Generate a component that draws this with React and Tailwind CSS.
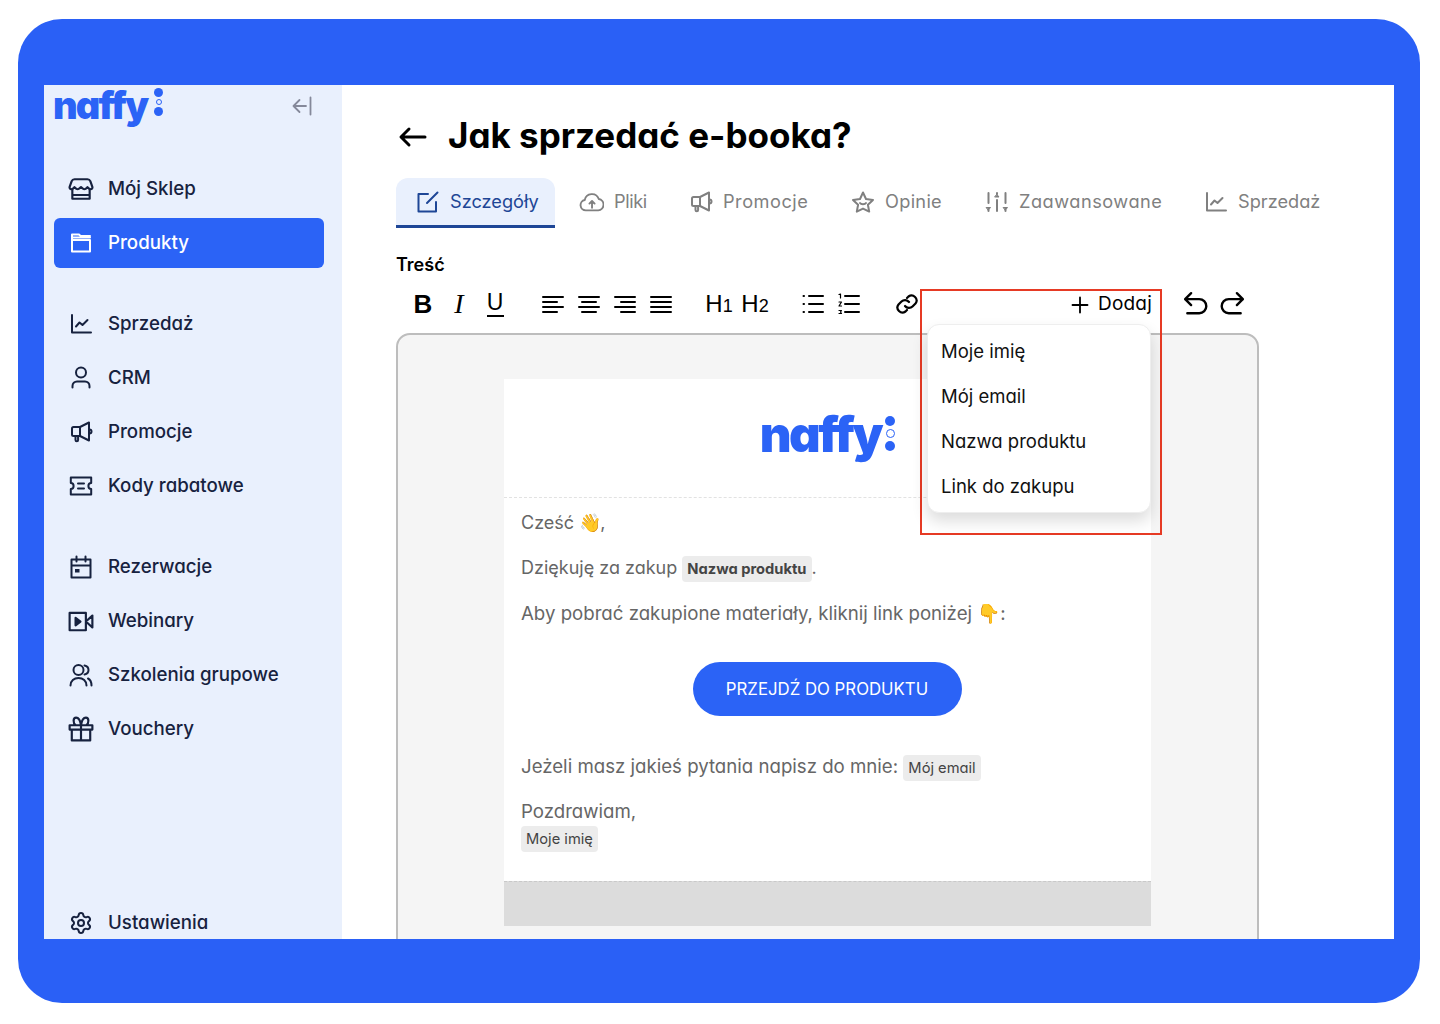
import React from "react";
import { Settings } from "lucide-react";

const S = ({ children, w = 24, h = 24, sw = 2, vb = "0 0 24 24", className = "" }) => (
  <svg width={w} height={h} viewBox={vb} fill="none" stroke="currentColor" strokeWidth={sw} strokeLinecap="round" strokeLinejoin="round" className={`shrink-0 ${className}`}>
    {children}
  </svg>
);

const Store = () => (
  <S w={26} h={26} className="-mx-[1px]">
    <path d="M6 3h12c1.500 0 2.200.8 2.600 1.800L22.500 10c.3 1-.3 2.200-1.600 2.200-1.200 0-2-.9-2.900-1.900-.9 1-2.200 1.900-3 1.900s-1.800-.9-3-1.900c-1.200 1-2.200 1.900-3 1.900s-2.100-.9-3-1.900c-.9 1-1.700 1.900-2.900 1.900C1.800 12.200 1.200 11 1.500 10l1.900-5.200C3.800 3.800 4.500 3 6 3z" />
    <path d="M4 12.500V21h16v-8.500M4 17.500h16" />
  </S>
);
const Folder = () => (
  <S>
    <path d="M3 9V3.500h7l1.500 1.500H21" />
    <path d="M3 9h18v11.500H3z" />
    <path d="M3 6.500h18" />
  </S>
);
const Chart = () => (
  <S>
    <path d="M3 3v17.500h19" />
    <path d="M7 14.500l3.500-4 3 2.500 5-5" />
  </S>
);
const User = () => (
  <S>
    <circle cx="12" cy="6.500" r="5" />
    <path d="M3.500 21.500V20c0-2.500 2-4.500 4.500-4.500h8c2.500 0 4.500 2 4.500 4.500v1.500" />
  </S>
);
const Mega = () => (
  <S>
    <path d="M20 2.500v18l-9-4.500H4.500A1.500 1.500 0 0 1 3 14.500V8.500A1.500 1.500 0 0 1 4.500 7H11z" />
    <path d="M11 7v9M20 9.500h.5a2 2 0 0 1 0 4H20M6.500 16v4a1.300 1.300 0 0 0 2.600 0v-4" />
  </S>
);
const Ticket = () => (
  <S>
    <path d="M1.800 3.500h20.400V9c-1.800 0-2.800 1.200-2.800 3s1 3 2.800 3v5.500H1.800V15c1.800 0 2.800-1.200 2.800-3s-1-3-2.800-3z" />
    <path d="M9 9.500h6M9 14.500h6" />
  </S>
);
const Cal = () => (
  <S>
    <path d="M2.500 4.500h19v18h-19zM2.500 10.500h19M7.500 1.500v5M16.500 1.500v5" />
    <rect x="6" y="14" width="4.500" height="3.500" fill="currentColor" stroke="none" />
  </S>
);
const Video = () => (
  <S w={26} h={26} className="-mx-[1px]">
    <path d="M1.500 4.500h15v16h-15zM16.500 12.500l6-5.500v11z" />
    <path d="M7 9l4.500 3.500L7 16z" fill="currentColor" />
  </S>
);
const Users = () => (
  <S>
    <circle cx="9.500" cy="7" r="5" />
    <path d="M1.500 22.500c0-4.500 3.500-7.500 8-7.500s8 3 8 7.500M15.500 2.500c2.500.5 4 2.500 4 4.500s-1.500 4-4 4.500M19 15.500c2.200 1.200 3.500 3.800 3.500 7" />
  </S>
);
const Gift = () => (
  <S w={26} h={26} className="-mx-[1px]">
    <path d="M1.500 8.500h21v4h-21zM3.500 12.500V22.500h17v-10M12 8.500v14M12 8.500S11 1.500 7.500 1.500c-3 0-3 5-.5 7M12 8.500s1-7 4.500-7c3 0 3 5 .5 7" />
  </S>
);

const NavItem = ({ icon, label, active }) => (
  <div className={`flex h-[50px] w-[270px] items-center gap-[15px] rounded-md pl-[15px] text-[18.700px] font-medium ${active ? "bg-[#2b63f6] text-white" : "text-[#17223f]"}`}>
    {icon}
    <span>{label}</span>
  </div>
);

const Logo = ({ size }) => (
  <span className={`font-black tracking-[-0.05em] text-[#2b63f6] ${size}`}>naffy</span>
);

const Dots = ({ big }) => (
  <div className={`flex flex-col items-center ${big ? "-mt-[4px] ml-[4px] gap-[3px]" : "-mt-[6px] ml-[7px] gap-[2px]"}`}>
    <span className={`rounded-full bg-[#2b63f6] ${big ? "size-[10px]" : "size-[9px]"}`} />
    <span className={`rounded-full border border-[#2b63f6] ${big ? "size-[9px]" : "size-[6px]"}`} />
    <span className={`rounded-full bg-[#2b63f6] ${big ? "size-[10px]" : "size-[9px]"}`} />
  </div>
);

const Tab = ({ icon, label, labelW }) => (
  <div className="flex h-[47px] items-center gap-[10px] px-[21px] text-[18.200px] text-[#808080]">
    {icon}
    <span className={`whitespace-nowrap ${labelW}`}>{label}</span>
  </div>
);

const TB = ({ children }) => (
  <div className="flex h-9 w-9 items-center justify-center text-black">{children}</div>
);

const Lines = ({ rows }) => (
  <S w={22} h={22} sw={2} vb="0 0 22 22">
    {rows.map((d, i) => <path key={i} d={d} />)}
  </S>
);

const Tag = ({ children, className = "" }) => (
  <span className={`inline-flex h-[26px] items-center rounded-[4px] bg-[#ececec] px-[5px] text-[14.700px] text-[#444] ${className}`}>{children}</span>
);

export default function App() {
  return (
    <div className="h-[1024px] w-[1440px] overflow-hidden bg-white pl-[18px] pt-[19px] font-['Inter','Liberation_Sans',sans-serif] [font-feature-settings:'cv11']">
      <div className="h-[984px] w-[1402px] rounded-[44px] bg-[#2a60f6] pl-[26px] pt-[66px]">
        <div className="flex h-[854px] w-[1350px] overflow-hidden bg-white">
          <aside className="flex h-[854px] w-[298px] shrink-0 flex-col bg-[#e9f0fd] pl-[10px]">
            <div className="flex h-[49px] w-[270px] items-start justify-between pr-[10px]">
              <div className="-ml-px flex h-[40px] items-center">
                <Logo size="text-[38px] leading-[38px]" />
                <Dots />
              </div>
              <div className="mt-[9px] text-[#85899a]">
                <S w={24} h={24} sw={1.8}>
                  <path d="M20.500 3.500v17M16 12H3.500M9.500 6l-6 6 6 6" />
                </S>
              </div>
            </div>
            <div className="mt-[39px] flex flex-col gap-1">
              <NavItem icon={<Store />} label="Mój Sklep" />
              <NavItem icon={<Folder />} label="Produkty" active />
            </div>
            <div className="mt-[31px] flex flex-col gap-1">
              <NavItem icon={<Chart />} label="Sprzedaż" />
              <NavItem icon={<User />} label="CRM" />
              <NavItem icon={<Mega />} label="Promocje" />
              <NavItem icon={<Ticket />} label="Kody rabatowe" />
            </div>
            <div className="mt-[31px] flex flex-col gap-1">
              <NavItem icon={<Cal />} label="Rezerwacje" />
              <NavItem icon={<Video />} label="Webinary" />
              <NavItem icon={<Users />} label="Szkolenia grupowe" />
              <NavItem icon={<Gift />} label="Vouchery" />
            </div>
            <div className="mt-[144px]">
              <NavItem icon={<Settings size={24} strokeWidth={2} />} label="Ustawienia" />
            </div>
          </aside>

          <main className="min-w-0 flex-1 pl-[54px] pt-[30px]">
            <div className="flex h-10 items-center">
              <S w={32} h={28} sw={3} vb="0 0 32 28" className="mt-1 text-black">
                <path d="M29 14H5.500M13 6l-8 8 8 8" />
              </S>
              <h1 className="ml-[20px] whitespace-nowrap text-[35px] font-bold text-black">Jak sprzedać e-booka?</h1>
            </div>

            <div className="mt-[23px] flex h-[50px]">
              <div className="flex h-[50px] w-[159px] items-center gap-[10px] rounded-t-xl border-b-[3px] border-[#1e4696] bg-[#e9f0fd] pl-[20px] text-[18.200px] text-[#1e4696]">
                <S sw={2}>
                  <path d="M12 4H2.500v17.500H20V12M21.500 2.500L11 13" />
                </S>
                <span>Szczegóły</span>
              </div>
              <Tab labelW="w-[33px] tracking-[-0.4px]" label="Pliki" icon={
                <S w={25} h={25} sw={1.800} className="ml-[3px]">
                  <path d="M7.500 20.500h-1a5 5 0 0 1-1-9.900 7 7 0 0 1 13.500-1 5.500 5.500 0 0 1-.5 10.900h-1.500z" />
                  <path d="M12.500 18v-6M10 14l2.500-2.500L15 14" />
                </S>
              } />
              <Tab labelW="w-[86px] tracking-[0.5px]" label="Promocje" icon={<Mega />} />
              <Tab labelW="w-[58px] tracking-[0.3px]" label="Opinie" icon={
                <S>
                  <path d="M12 2.500l3 6.500 7 .9-5.100 4.800 1.300 6.900L12 18.600l-6.200 3 1.300-6.900L2 9.900 9 9z" />
                  <path d="M9 13c1 1.500 5 1.500 6 0" />
                </S>
              } />
              <Tab labelW="w-[143px] tracking-[0.5px]" label="Zaawansowane" icon={
                <S>
                  <path d="M3.500 3v10M12 10v11M20.500 3v10" />
                  <path d="M1.500 17.500h4l-2 2.500zM10 7h4l-2-2.500zM18.500 17.500h4l-2 2.500z" fill="currentColor" strokeWidth="1" />
                  <path d="M3.500 20v1M12 3v1M20.500 20v1" />
                </S>
              } />
              <Tab labelW="w-[84px]" label="Sprzedaż" icon={<Chart />} />
            </div>

            <div className="mt-[25px] h-6 text-[18px] font-semibold leading-6 text-black">Treść</div>

            <div className="relative">
              <div className="mt-[9px] flex h-9 w-[854px] items-center gap-[22px] pl-[9px]">
                <div className="flex">
                  <TB><span className="font-['Liberation_Sans',sans-serif] text-[26px] font-bold">B</span></TB>
                  <TB><span className="font-['Liberation_Serif',serif] text-[28px] italic">I</span></TB>
                  <TB>
                    <span className="flex flex-col items-center leading-none">
                      <span className="font-['Liberation_Sans',sans-serif] text-[23px] leading-[21px]">U</span>
                      <span className="mt-[2px] h-[2px] w-[17px] bg-black" />
                    </span>
                  </TB>
                </div>
                <div className="flex">
                  <TB><Lines rows={["M1 4h20", "M1 9h14", "M1 14h20", "M1 19h14"]} /></TB>
                  <TB><Lines rows={["M1 4h20", "M4 9h14", "M1 14h20", "M4 19h14"]} /></TB>
                  <TB><Lines rows={["M1 4h20", "M7 9h14", "M1 14h20", "M7 19h14"]} /></TB>
                  <TB><Lines rows={["M1 4h20", "M1 9h20", "M1 14h20", "M1 19h20"]} /></TB>
                </div>
                <div className="flex font-['Liberation_Sans',sans-serif] text-[24px] text-black">
                  <TB><span className="whitespace-nowrap">H<span className="text-[18px]">1</span></span></TB>
                  <TB><span className="whitespace-nowrap">H<span className="text-[18px]">2</span></span></TB>
                </div>
                <div className="flex">
                  <TB>
                    <Lines rows={["M7 3h14", "M7 11h14", "M7 19h14", "M1.500 3h.5", "M1.500 11h.5", "M1.500 19h.5"]} />
                  </TB>
                  <TB>
                    <S w={22} h={22} sw={2} vb="0 0 22 22">
                      <path d="M7 3h14M7 11h14M7 19h14" />
                      <path d="M1 1.500l1.500-.5v4M1 9h2.500l-2.500 4h2.500M1 17.500h2.500l-1 1.500 1 1.500H1" strokeWidth="1.200" />
                    </S>
                  </TB>
                </div>
                <TB>
                  <S sw={2.200}>
                    <path d="M10 14a5 5 0 0 0 7.500.5l3-3a5 5 0 0 0-7-7l-1.500 1.500" />
                    <path d="M14 10a5 5 0 0 0-7.500-.5l-3 3a5 5 0 0 0 7 7l1.500-1.500" />
                  </S>
                </TB>
                <div className="-mr-[1px] flex flex-1 items-center justify-end gap-2 pr-[5px] pt-px text-[19px] tracking-[0.2px] text-black">
                  <S w={20} h={20} sw={2.200}><path d="M12 3v18M3 12h18" /></S>
                  <span>Dodaj</span>
                </div>
                <div className="flex">
                  <TB>
                    <S w={26} h={26} sw={2.200}><path d="M2 7.500h13a6.500 6.500 0 0 1 0 13H4M7.500 2L2 7.500 7.500 13" /></S>
                  </TB>
                  <TB>
                    <S w={26} h={26} sw={2.200}><path d="M22 7.500H9a6.500 6.500 0 0 0 0 13h11M16.500 2L22 7.500 16.500 13" /></S>
                  </TB>
                </div>
              </div>

              <div className="mt-[11px] h-[700px] w-[863px] rounded-t-[14px] border-2 border-[#bdbdbd] bg-[#f5f5f5] pl-[106px] pt-[44px]">
                <div className="w-[647px] bg-white text-[18px] leading-7 text-[#666]">
                  <div className="flex h-[119px] items-center justify-center border-b border-dashed border-[#e2e2e2] pb-[6px]">
                    <Logo size="text-[49px] leading-[60px]" />
                    <Dots big />
                  </div>
                  <div className="pl-[17px] pr-[18px] pt-[11px]">
                    <p className="h-7">Cześć 👋<span className="-ml-px">,</span></p>
                    <p className="mt-[17px] h-7">Dziękuję za zakup <Tag className="font-bold">Nazwa produktu</Tag>.</p>
                    <p className="mt-[17px] h-7 text-[18.650px]">Aby pobrać zakupione materiały, kliknij link poniżej 👇:</p>
                    <div className="mt-[35px] flex justify-center">
                      <div className="flex h-[54px] w-[269px] items-center justify-center rounded-full bg-[#2b63f6] text-[16.800px] text-white">PRZEJDŹ DO PRODUKTU</div>
                    </div>
                    <p className="mt-[36px] h-7 text-[18.650px]">Jeżeli masz jakieś pytania napisz do mnie: <Tag>Mój email</Tag></p>
                    <p className="mt-[17px] h-7 text-[18.650px]">Pozdrawiam,</p>
                    <div className="-mt-px h-[57px]"><Tag>Moje imię</Tag></div>
                  </div>
                  <div className="h-[45px] border-t border-dashed border-[#c9c9c9] bg-[#dcdcdc]" />
                </div>
              </div>

              <div className="absolute left-[524px] top-[3px] h-[246px] w-[242px] border-2 border-[#e63a24]" />
              <div className="absolute left-[531px] top-[38px] flex h-[189px] w-[224px] flex-col rounded-xl border border-[#eeeeee] bg-white pl-[13px] pt-[4px] text-[18.500px] text-[#111] shadow-[0_8px_16px_rgba(0,0,0,0.14)]">
                <div className="flex h-[45px] items-center">Moje imię</div>
                <div className="flex h-[45px] items-center">Mój email</div>
                <div className="flex h-[45px] items-center">Nazwa produktu</div>
                <div className="flex h-[45px] items-center">Link do zakupu</div>
              </div>
            </div>
          </main>
        </div>
      </div>
    </div>
  );
}
